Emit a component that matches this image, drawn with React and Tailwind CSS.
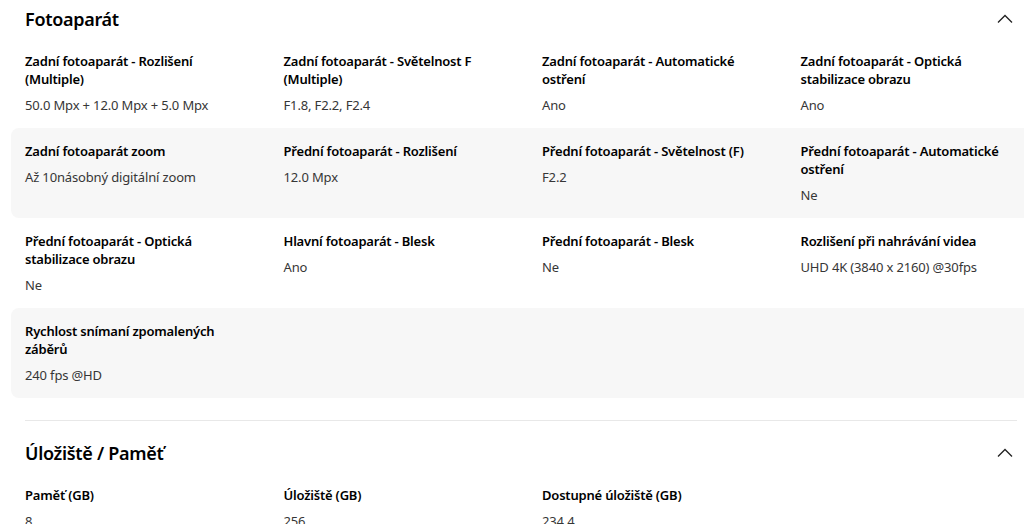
const camera = [
  [
    { label: "Zadní fotoaparát - Rozlišení (Multiple)", value: "50.0 Mpx + 12.0 Mpx + 5.0 Mpx" },
    { label: "Zadní fotoaparát - Světelnost F (Multiple)", value: "F1.8, F2.2, F2.4" },
    { label: "Zadní fotoaparát - Automatické ostření", value: "Ano" },
    { label: "Zadní fotoaparát - Optická stabilizace obrazu", value: "Ano" },
  ],
  [
    { label: "Zadní fotoaparát zoom", value: "Až 10násobný digitální zoom" },
    { label: "Přední fotoaparát - Rozlišení", value: "12.0 Mpx" },
    { label: "Přední fotoaparát - Světelnost (F)", value: "F2.2" },
    { label: "Přední fotoaparát - Automatické ostření", value: "Ne" },
  ],
  [
    { label: "Přední fotoaparát - Optická stabilizace obrazu", value: "Ne" },
    { label: "Hlavní fotoaparát - Blesk", value: "Ano" },
    { label: "Přední fotoaparát - Blesk", value: "Ne" },
    { label: "Rozlišení při nahrávání videa", value: "UHD 4K (3840 x 2160) @30fps" },
  ],
  [{ label: "Rychlost snímaní zpomalených záběrů", value: "240 fps @HD" }],
];

const storage = [
  [
    { label: "Paměť (GB)", value: "8" },
    { label: "Úložiště (GB)", value: "256" },
    { label: "Dostupné úložiště (GB)", value: "234.4" },
  ],
];

function SectionHeader({ title }) {
  return (
    <div className="flex items-center justify-between h-[38px] pl-[14px] pr-0">
      <h2 className="text-[18px] font-semibold tracking-[-0.3px] text-black leading-none">{title}</h2>
      <svg width="16" height="10" viewBox="0 0 16 10" fill="none" className="mt-[-1px]">
        <polyline points="1,8.5 8,1.5 15,8.5" stroke="#222" strokeWidth="1.3" />
      </svg>
    </div>
  );
}

function SpecRows({ rows }) {
  return (
    <div className="w-[1060px]">
      {rows.map((row, i) => (
        <div
          key={i}
          className={`grid grid-cols-[258.5px_258.5px_258.5px_258.5px] px-[14px] pt-[14px] pb-[14px] min-h-[90px] rounded-lg ${
            i % 2 === 1 ? "bg-[#f7f7f7]" : "bg-white"
          }`}
        >
          {row.map((spec, j) => (
            <div key={j} className="pr-[36px]">
              <p className="text-[13px] leading-[18px] font-semibold tracking-[-0.2px] text-black">{spec.label}</p>
              <p className="mt-[8px] text-[13px] leading-[18px] tracking-[-0.15px] text-[#363636]">{spec.value}</p>
            </div>
          ))}
        </div>
      ))}
    </div>
  );
}

export default function App() {
  return (
    <div
      className="w-[1024px] h-[524px] overflow-hidden bg-white px-[11px]"
      style={{ fontFamily: '"Noto Sans", sans-serif' }}
    >
      {/* Fotoaparát */}
      <SectionHeader title="Fotoaparát" />
      <SpecRows rows={camera} />

      <div className="ml-[14px] mt-[22px] mb-[13px] w-[992px] border-t border-[#e8e8e8]" />

      {/* Úložiště */}
      <SectionHeader title="Úložiště / Paměť" />
      <SpecRows rows={storage} />
    </div>
  );
}
